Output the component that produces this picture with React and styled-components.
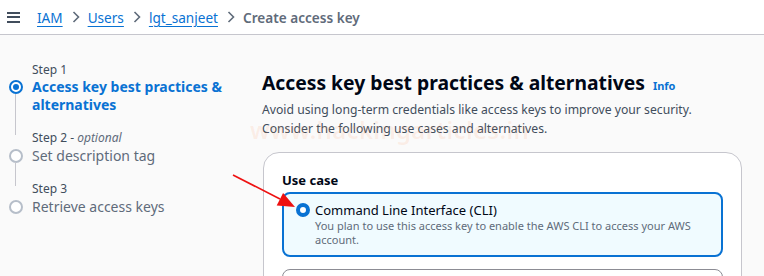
import React from 'react';
import styled, { createGlobalStyle } from 'styled-components';

const GlobalStyle = createGlobalStyle`
	html, body
	{
	  margin: 0;
	  padding: 0;
	  background: #fafafa;
	  font-family: "Noto Sans", "Open Sans", sans-serif;
	  overflow: hidden;
	}
`;

const Page = styled.div`
	width: 764px;
	height: 276px;
	position: relative;
	overflow: hidden;
`;

const TopBar = styled.header`
	height: 35px;
	background: #ffffff;
	border-bottom: 1px solid #c6c6cd;
	display: flex;
	align-items: center;
	padding-left: 7px;
	box-sizing: border-box;
`;

const Burger = styled.span`
	display: flex;
	flex-direction: column;
	gap: 2.5px;
	width: 13px;
	margin-right: 17px;
	span
	{
	  height: 2px;
	  background: #414d5c;
	}
`;

const Crumbs = styled.nav`
	display: flex;
	align-items: center;
	font-size: 13.6px;
`;

const Crumb = styled.a`
	color: #0972d3;
	text-decoration: underline;
	text-underline-offset: 3px;
`;

const Current = styled.span`
	color: #5f6b7a;
	font-weight: 600;
`;

const Chevron = styled.span`
	display: flex;
	margin: 0 8px 0 9px;
`;

const Body = styled.div`
	display: flex;
	padding-top: 26px;
`;

const Steps = styled.ol`
	list-style: none;
	margin: 0;
	padding: 0 0 0 8px;
	width: 254px;
	flex-shrink: 0;
`;

const Step = styled.li`
	display: grid;
	grid-template-columns: 24px 1fr;
	position: relative;
	padding-bottom: ${props => props.gap}px;
`;

const StepLabel = styled.div`
	grid-column: 2;
	font-size: 12px;
	color: #414d5c;
	line-height: 17px;
	i
	{
	  color: #5f6b7a;
	}
`;

const StepTitle = styled.div`
	grid-column: 2;
	font-size: 14px;
	line-height: 18px;
	margin-top: ${props => props.active ? 0 : 1}px;
	color: ${props => props.active ? '#0972d3' : '#5f6b7a'};
	font-weight: ${props => props.active ? 700 : 400};
`;

const Dot = styled.span`
	position: absolute;
	left: 1px;
	top: ${props => props.active ? 19 : 20}px;
	width: 10px;
	height: 10px;
	border-radius: 50%;
	border: 2px solid ${props => props.active ? '#0972d3' : '#b6bec9'};
	background: #ffffff;
	&::after
	{
	  content: '';
	  display: ${props => props.active ? 'block' : 'none'};
	  position: absolute;
	  inset: 2px;
	  border-radius: 50%;
	  background: #0972d3;
	}
`;

const Rail = styled.span`
	position: absolute;
	left: 7px;
	top: 33px;
	bottom: -6px;
	width: 1px;
	background: #c6c6cd;
`;

const Main = styled.main`
	flex: 1;
	padding-top: 10px;
	padding-right: 22px;
`;

const Heading = styled.h1`
	margin: 0;
	font-size: 19.3px;
	font-weight: 700;
	color: #000716;
	line-height: 24px;
	display: flex;
	align-items: baseline;
	gap: 8px;
`;

const Info = styled.a`
	font-size: 11px;
	color: #0972d3;
	font-weight: 700;
`;

const Lead = styled.p`
	margin: 2px 0 0;
	font-size: 12.2px;
	line-height: 19px;
	color: #414d5c;
`;

const Card = styled.section`
	margin-top: 14px;
	margin-left: 1px;
	background: #ffffff;
	border: 1px solid #c6c6cd;
	border-radius: 16px;
	padding: 18px 18px 0;
	height: 140px;
`;

const Label = styled.div`
	font-size: 13px;
	font-weight: 700;
	color: #000716;
	line-height: 18px;
	margin-bottom: 3px;
`;

const Options = styled.div`
	display: flex;
	flex-direction: column;
	gap: 12px;
`;

const Option = styled.label`
	display: grid;
	grid-template-columns: 20px 1fr;
	column-gap: 12px;
	padding: 7px 12px 8px 11px;
	border: ${props => props.checked ? '2px solid #0972d3' : '1px solid #8c8c94'};
	background: ${props => props.checked ? '#f0fbff' : '#ffffff'};
	border-radius: 8px;
	min-height: 40px;
`;

const Radio = styled.span`
	width: 14px;
	height: 14px;
	margin-top: 2px;
	margin-left: 1px;
	border-radius: 50%;
	background: #ffffff;
	border: 4px solid #0972d3;
	box-sizing: border-box;
`;

const OptionTitle = styled.div`
	font-size: 13px;
	color: #000716;
	line-height: 18px;
	margin-left: -12px;
`;

const OptionText = styled.div`
	grid-column: 2;
	font-size: 11px;
	color: #5f6b7a;
	line-height: 14px;
	margin-left: -12px;
`;

const Watermark = styled.div`
	position: absolute;
	left: 250px;
	top: 113px;
	font-size: 24px;
	font-weight: 600;
	letter-spacing: 0.3px;
	color: rgba(250, 150, 90, 0.13);
	pointer-events: none;
`;

const Arrow = styled.svg`
	position: absolute;
	left: 228px;
	top: 170px;
`;

const ChevronIcon = () => (
	<svg width="8" height="12" viewBox="0 0 8 12">
		<path d="M1.5 1 L6.5 6 L1.5 11" fill="none" stroke="#5f6b7a" strokeWidth="1.6" />
	</svg>
);

class App extends React.Component
{
	render()
	{
		return (
			<Page>
				<GlobalStyle />
				<TopBar>
					<Burger><span /><span /><span /></Burger>
					<Crumbs>
						<Crumb>IAM</Crumb>
						<Chevron><ChevronIcon /></Chevron>
						<Crumb>Users</Crumb>
						<Chevron><ChevronIcon /></Chevron>
						<Crumb>lgt_sanjeet</Crumb>
						<Chevron><ChevronIcon /></Chevron>
						<Current>Create access key</Current>
					</Crumbs>
				</TopBar>

				<Body>
					<Steps>
						<Step gap={15}>
							<Dot active />
							<Rail />
							<StepLabel>Step 1</StepLabel>
							<StepTitle active>Access key best practices &amp; alternatives</StepTitle>
						</Step>
						<Step gap={15}>
							<Dot />
							<Rail />
							<StepLabel>Step 2 - <i>optional</i></StepLabel>
							<StepTitle>Set description tag</StepTitle>
						</Step>
						<Step gap={0}>
							<Dot />
							<StepLabel>Step 3</StepLabel>
							<StepTitle>Retrieve access keys</StepTitle>
						</Step>
					</Steps>

					<Main>
						<Heading>
							Access key best practices &amp; alternatives
							<Info>Info</Info>
						</Heading>
						<Lead>
							Avoid using long-term credentials like access keys to improve your security.<br />
							Consider the following use cases and alternatives.
						</Lead>
						<Card>
							<Label>Use case</Label>
							<Options>
								<Option checked>
									<Radio />
									<OptionTitle>Command Line Interface (CLI)</OptionTitle>
									<OptionText>You plan to use this access key to enable the AWS CLI to access your AWS account.</OptionText>
								</Option>
								<Option />
							</Options>
						</Card>
					</Main>
				</Body>

				<Watermark>www.hackingarticles.in</Watermark>
				<Arrow width="72" height="50" viewBox="0 0 72 50">
					<line x1="5" y1="5" x2="52" y2="29" stroke="#ee1111" strokeWidth="1.6" />
					<polygon points="67,37 48.7,35.4 55.1,23" fill="#ee1111" />
				</Arrow>
			</Page>
		);
	}
}

export default App;
